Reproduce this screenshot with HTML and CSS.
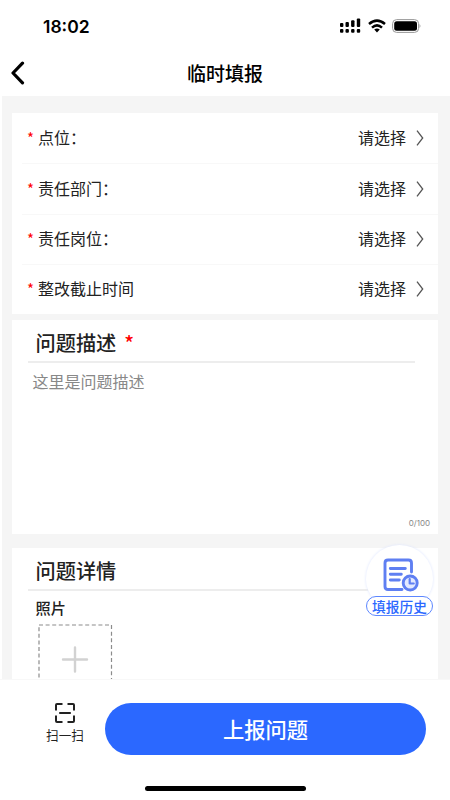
FILE: index.html
```html
<!DOCTYPE html>
<html lang="zh-CN">
<head>
<meta charset="utf-8">
<meta name="viewport" content="width=device-width, initial-scale=1">
<title>临时填报</title>
<link rel="stylesheet" href="styles.css">
</head>
<body>
<div class="phone">
  <div class="status">
    <span class="time">18:02</span>
    <div class="status-icons">
      <svg class="signal" width="22" height="16" viewBox="0 0 22 16">
        <rect x="1" y="5" width="3.4" height="4" rx="1"/><rect x="6.5" y="4" width="3.4" height="5" rx="1"/><rect x="12.1" y="2.2" width="3.4" height="6.8" rx="1"/><rect x="17.8" y="0.5" width="3.4" height="8.5" rx="1"/>
        <rect x="1" y="11" width="3.4" height="3.8" rx="1"/><rect x="6.5" y="11" width="3.4" height="3.8" rx="1"/><rect x="12.1" y="11" width="3.4" height="3.8" rx="1"/><rect x="17.8" y="11" width="3.4" height="3.8" rx="1"/>
      </svg>
      <svg class="wifi" width="18" height="14" viewBox="0 0 18 14" fill="none" stroke="#000" stroke-width="2.5">
        <path d="M1 5Q9-1.800 17 5M4 8.600Q9 4.200 14 8.600"/><path d="M6.200 10.600Q9 8.500 11.800 10.600L9 13.500Z" fill="#000" stroke="none"/>
      </svg>
      <svg class="battery" width="29" height="14" viewBox="0 0 29 14">
        <rect x=".6" y=".6" width="26" height="12.800" rx="4" fill="none" stroke="#999" stroke-width="1"/><rect x="2.200" y="2.200" width="22.800" height="9.600" rx="2.500"/><path d="M27.600 5Q29.100 7 27.600 9Z" fill="#888"/>
      </svg>
    </div>
  </div>
  <header class="nav">
    <svg class="back" width="14" height="24" viewBox="0 0 14 24"><path d="M11.500 2.200L2 12l9.500 9.800" fill="none" stroke="#000" stroke-width="3.200" stroke-linecap="round" stroke-linejoin="round"/></svg>
    <h1>临时填报</h1>
  </header>
  <main class="content">
    <section class="card fields">
      <div class="row"><span class="star">*</span><span class="label">点位：</span><span class="value">请选择</span><svg class="arrow" width="8" height="16" viewBox="0 0 8 16"><path d="M1 .7L6.700 8 1 15.300"/></svg></div>
      <div class="row"><span class="star">*</span><span class="label">责任部门：</span><span class="value">请选择</span><svg class="arrow" width="8" height="16" viewBox="0 0 8 16"><path d="M1 .7L6.700 8 1 15.300"/></svg></div>
      <div class="row"><span class="star">*</span><span class="label">责任岗位：</span><span class="value">请选择</span><svg class="arrow" width="8" height="16" viewBox="0 0 8 16"><path d="M1 .7L6.700 8 1 15.300"/></svg></div>
      <div class="row"><span class="star">*</span><span class="label">整改截止时间</span><span class="value">请选择</span><svg class="arrow" width="8" height="16" viewBox="0 0 8 16"><path d="M1 .7L6.700 8 1 15.300"/></svg></div>
    </section>
    <section class="card describe">
      <h2>问题描述<span class="required">*</span></h2>
      <p class="placeholder">这里是问题描述</p>
      <span class="count">0/100</span>
    </section>
    <section class="card detail">
      <h2>问题详情</h2>
      <h3>照片</h3>
      <svg class="upload" width="75" height="75" viewBox="0 0 75 75" fill="none">
        <rect x="1" y="1" width="72.500" height="72.500" stroke="#8c8c8c" stroke-width="1.200" stroke-dasharray="4 2.600"/>
        <path d="M25 35.500h24M37 23.500v24" stroke="#d2d2d2" stroke-width="2.400" stroke-linecap="round"/>
      </svg>
    </section>
  </main>
  <footer class="bottom">
    <div class="actions">
      <div class="scan">
        <svg width="20" height="20" viewBox="0 0 20 20" fill="none" stroke="#222" stroke-width="2"><path d="M1 7.500V2Q1 1 2 1h5.500M12.500 1H18q1 0 1 1v5.500M19 12.500V18q0 1-1 1h-5.500M7.500 19H2q-1 0-1-1v-5.500M4.200 10h11.600"/></svg>
        <span>扫一扫</span>
      </div>
      <button class="submit">上报问题</button>
    </div>
    <div class="home"></div>
  </footer>
  <div class="history">
    <div class="bubble">
      <svg width="36" height="34" viewBox="0 0 36 34" fill="none" stroke="#5f7ff2" stroke-width="2.900" stroke-linecap="round" stroke-linejoin="round">
        <path d="M28.500 14V5q0-3-3-3H5Q2 2 2 5v23.500q0 3 3 3h14M7.300 10.500h15M7.300 16.300h11M7.300 22h9"/><circle cx="27.200" cy="25" r="7" fill="#e3e9ff"/><path d="M26.700 21v4.500h4" stroke-width="2.200"/>
      </svg>
    </div>
    <span class="history-label">填报历史</span>
  </div>
</div>
</body>
</html>
```
FILE: styles.css
```css
* { box-sizing: border-box; }
body { margin: 0; background: #fff; font-family: "Noto Sans CJK SC", sans-serif; color: #222; }
h1, h2, h3, p { margin: 0; }
svg { display: block; flex: none; }
.phone { position: relative; width: 450px; height: 800px; display: flex; flex-direction: column; overflow: hidden; }
.status { height: 50px; flex: none; display: flex; justify-content: space-between; align-items: center; padding: 2px 29px 0 43px; }
.time { padding-top: 2px; font: 600 17.500px/22px Inter, sans-serif; color: #000; }
.status-icons { display: flex; align-items: center; gap: 6.500px; }
.nav { height: 46px; flex: none; display: grid; grid-template-columns: 1fr auto 1fr; align-items: center; padding: 0 11px; }
.nav h1 { font-size: 19px; line-height: 28px; font-weight: 500; color: #000; }
.content { flex: 1; min-height: 0; overflow: hidden; margin-left: 2px; padding: 17px 12px 0 10px; background: #f5f5f5; }
.card { background: #fff; }
.fields { height: 201px; display: grid; grid-template-rows: repeat(4, 1fr); padding-left: 10px; }
.row { display: flex; align-items: center; padding: 0 14px 0 5px; font-size: 16px; line-height: 24px; }
.row + .row { border-top: 1px solid #f8f8f8; }
.star { width: 11px; color: #f00; font-size: 15px; }
.label { flex: 1; padding-bottom: 2px; }
.value { margin-right: 10px; padding-bottom: 2px; }
.arrow path { fill: none; stroke: #555; stroke-width: 1.300; }
.describe { height: 214px; margin-top: 6px; padding: 0 8px 0 16px; display: flex; flex-direction: column; }
.card h2 { height: 43px; margin-right: 15px; padding-left: 7.500px; border-bottom: 2px solid #ededed; font-size: 20.200px; line-height: 46px; font-weight: 500; }
.required { margin-left: 8px; color: #f00; }
.placeholder { padding: 5px 0 0 4.500px; font-size: 16px; line-height: 26px; color: #888; }
.count { margin-top: auto; align-self: flex-end; font: 8px/12px Inter, sans-serif; color: #888; padding-bottom: 5px; }
.detail { height: 200px; margin-top: 14px; padding: 0 8px 0 16px; }
.detail h3 { padding: 3px 0 0 7.500px; font-size: 15.200px; line-height: 26px; font-weight: 500; }
.upload { margin: 4px 0 0 10px; }
.bottom { height: 121px; flex: none; background: #fff; border-top: 1px solid #f8f8f8; display: flex; flex-direction: column; align-items: center; }
.actions { width: 100%; display: flex; padding: 23px 24px 0 45px; }
.scan { width: 40px; margin-right: 20px; display: flex; flex-direction: column; align-items: center; gap: 2px; font-size: 12.600px; line-height: 19px; white-space: nowrap; }
.submit { flex: 1; height: 52px; border: 0; border-radius: 26px; background: #2b68ff; color: #fff; font: 500 21.300px/52px "Noto Sans CJK SC", sans-serif; padding: 0; }
.home { width: 161px; height: 5px; margin-top: 31px; border-radius: 3px; background: #000; }
.history { position: absolute; left: 366px; top: 545px; width: 67px; }
.bubble { height: 62px; border-radius: 34px 34px 28px 28px; background: #fff; box-shadow: 0 0 3px #dce4ff; display: flex; justify-content: center; padding: 13px 0 0 3px; }
.history-label { position: relative; display: block; height: 20px; margin-top: -11px; border: 1px solid #5d87ff; border-radius: 10px; background: #fff; color: #2b68ff; font-size: 13.700px; line-height: 18px; font-weight: 500; text-align: center; }
```
